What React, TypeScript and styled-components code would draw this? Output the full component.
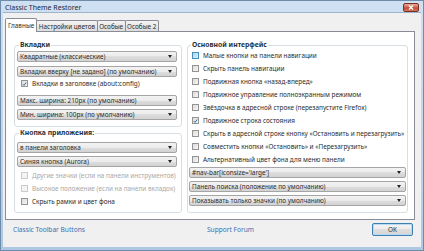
import React from "react";
import styled, { createGlobalStyle, css } from "styled-components";

const GlobalStyle = createGlobalStyle`
  html, body {
    margin: 0;
    padding: 0;
  }
  body {
    width: 424px;
    height: 251px;
    overflow: hidden;
    background: #ffffff;
    font-family: "Noto Sans", "Liberation Sans", sans-serif;
    color: #2b2b2b;
  }
`;

const Window = styled.div`
  width: 424px;
  height: 251px;
  box-sizing: border-box;
  display: flex;
  flex-direction: column;
  border: 1px solid #6f8cab;
  padding: 0 2px 3px 2px;
  background: linear-gradient(#cfe0f2, #bfd4ea 60%, #aec8e3);
`;

const TitleBar = styled.div`
  height: 11px;
  display: flex;
  align-items: center;
  padding-left: 2px;
`;

const Title = styled.span`
  font-size: 7px;
  line-height: 11px;
  color: #1b2838;
  margin-top: 1px;
`;

const CloseButton = styled.div`
  margin-left: auto;
  margin-right: 2px;
  align-self: flex-start;
  margin-top: 2px;
  width: 16px;
  height: 9px;
  box-sizing: border-box;
  border: 1px solid #7a3026;
  border-radius: 2px;
  background: linear-gradient(#e8a898, #d06a58 45%, #c04834 55%, #d47a62);
  display: flex;
  align-items: center;
  justify-content: center;
`;

const Client = styled.div`
  flex: 1;
  display: flex;
  flex-direction: column;
  background: #f0f0f0;
  border-top: 1px solid #9eb4cc;
  padding-top: 5px;
`;

const TabStrip = styled.div`
  display: flex;
  align-items: flex-end;
  height: 13px;
  padding-left: 2px;
  position: relative;
  z-index: 1;
`;

const Tab = styled.div<{ $active?: boolean }>`
  box-sizing: border-box;
  font-size: 6.4px;
  padding: 0 1.5px;
  border: 1px solid #898c95;
  border-bottom: none;
  border-radius: 2px 2px 0 0;
  margin-right: -1px;
  display: flex;
  align-items: center;
  white-space: nowrap;
  ${(p) =>
    p.$active
      ? css`
          height: 14px;
          margin-bottom: -1px;
          padding: 0 2px;
          background: #ffffff;
          position: relative;
          z-index: 2;
        `
      : css`
          height: 11px;
          background: linear-gradient(#f5f5f5, #e8e8e8 50%, #dcdcdc);
        `}
`;

const TabPanel = styled.div`
  height: 189px;
  box-sizing: border-box;
  margin: 0 6px 0 2px;
  border: 1px solid #898c95;
  background: #ffffff;
  padding: 9px 6px 7px 8px;
  display: grid;
  grid-template-columns: 168px 221px;
  column-gap: 5px;
`;

const Column = styled.div`
  display: flex;
  flex-direction: column;
  gap: 2px;
`;

const Group = styled.fieldset<{ $grow?: boolean; $pad: string }>`
  margin: 0;
  min-width: 0;
  border: 1px solid #d5dfe5;
  border-radius: 3px;
  padding: ${(p) => p.$pad};
  display: flex;
  flex-direction: column;
  ${(p) => p.$grow && "flex: 1;"}
`;

const Legend = styled.legend`
  font-size: 6.8px;
  font-weight: 700;
  line-height: 8px;
  padding: 0 1px;
  margin-left: 2px;
  color: #26303a;
`;

const Select = styled.div<{ $mt?: number }>`
  height: 11px;
  box-sizing: border-box;
  margin-top: ${(p) => p.$mt ?? 0}px;
  border: 1px solid #a5a5a5;
  border-radius: 2px;
  background: linear-gradient(#f3f3f3, #ebebeb 50%, #dedede 50%, #d2d2d2);
  display: flex;
  align-items: center;
  padding: 0 4px 0 2px;
  font-size: 6.4px;
  white-space: nowrap;
`;

const SelectText = styled.span`
  flex: 1;
  overflow: hidden;
`;

const Arrow = styled.span`
  width: 0;
  height: 0;
  border-left: 2px solid transparent;
  border-right: 2px solid transparent;
  border-top: 3px solid #222222;
`;

const CheckRow = styled.div<{ $mt?: number; $h?: number; $pl: number; $disabled?: boolean }>`
  height: ${(p) => p.$h ?? 13}px;
  margin-top: ${(p) => p.$mt ?? 0}px;
  padding-left: ${(p) => p.$pl}px;
  display: flex;
  align-items: center;
  gap: 4px;
  font-size: 6.4px;
  white-space: nowrap;
  color: ${(p) => (p.$disabled ? "#a8a8a8" : "#2b2b2b")};
`;

type BoxState = "normal" | "checked" | "hover" | "disabled";

const Box = styled.span<{ $state: BoxState }>`
  width: 7px;
  height: 7px;
  box-sizing: border-box;
  flex: none;
  display: flex;
  align-items: center;
  justify-content: center;
  border: 1px solid #949494;
  background: linear-gradient(135deg, #dcdcdc, #f6f6f6);
  ${(p) =>
    p.$state === "hover" &&
    css`
      border-color: #4a8dc0;
      background: linear-gradient(135deg, #a6d8f3, #dcf0fb);
    `}
  ${(p) =>
    p.$state === "disabled" &&
    css`
      border-color: #cccccc;
      background: #f4f4f4;
    `}
`;

const Footer = styled.div`
  flex: 1;
  display: flex;
  align-items: flex-start;
  padding: 3px 8px 0 10px;
`;

const LinkText = styled.span<{ $w?: number }>`
  font-size: 6.6px;
  line-height: 13px;
  color: #3a6fb3;
  ${(p) => p.$w && `width: ${p.$w}px;`}
  flex: none;
`;

const OkButton = styled.div`
  margin-left: auto;
  width: 41px;
  height: 13px;
  box-sizing: border-box;
  border: 1px solid #3c7fb1;
  border-radius: 2px;
  box-shadow: inset 0 0 0 1px #b8dcf2;
  background: linear-gradient(#f4f4f4, #ececec 50%, #dfdfdf 50%, #d4d4d4);
  font-size: 6.4px;
  display: flex;
  align-items: center;
  justify-content: center;
`;

function Dropdown({ label, mt }: { label: string; mt?: number }) {
  return (
    <Select $mt={mt}>
      <SelectText>{label}</SelectText>
      <Arrow />
    </Select>
  );
}

interface CheckProps {
  label: string;
  state?: BoxState;
  mt?: number;
  h?: number;
  pl: number;
}

function Check({ label, state = "normal", mt, h, pl }: CheckProps) {
  return (
    <CheckRow $mt={mt} $h={h} $pl={pl} $disabled={state === "disabled"}>
      <Box $state={state}>
        {state === "checked" && (
          <svg width="6" height="6" viewBox="0 0 6 6">
            <path d="M1 3.2 L2.4 4.7 L5 1.2" fill="none" stroke="#36538f" strokeWidth="1.1" />
          </svg>
        )}
      </Box>
      {label}
    </CheckRow>
  );
}

const rightChecks: { label: string; state?: BoxState }[] = [
  { label: "Малые кнопки на панели навигации", state: "hover" },
  { label: "Скрыть панель навигации" },
  { label: "Подвижная кнопка «назад-вперед»" },
  { label: "Подвижное управление полноэкранным режимом" },
  { label: "Звёздочка в адресной строке (перезапустите Firefox)" },
  { label: "Подвижное строка состояния", state: "checked" },
  { label: "Скрыть в адресной строке кнопку «Остановить и перезагрузить»" },
  { label: "Совместить кнопки «Остановить» и «Перезагрузить»" },
  { label: "Альтернативный цвет фона для меню панели" },
];

export default function App() {
  return (
    <>
      <GlobalStyle />
      <Window>
        <TitleBar>
          <Title>Classic Theme Restorer</Title>
          <CloseButton>
            <svg width="6" height="5" viewBox="0 0 6 5">
              <path d="M1 0.5 L5 4.5 M5 0.5 L1 4.5" stroke="#ffffff" strokeWidth="1.2" />
            </svg>
          </CloseButton>
        </TitleBar>
        <Client>
          <TabStrip>
            <Tab $active>Главные</Tab>
            <Tab>Настройки цветов</Tab>
            <Tab>Особые</Tab>
            <Tab>Особые 2</Tab>
          </TabStrip>
          <TabPanel>
            <Column>
              <Group $pad="0 4px 6px 2px">
                <Legend>Вкладки</Legend>
                <Dropdown mt={2} label="Квадратные (классические)" />
                <Dropdown mt={4} label="Вкладки вверху [не задано] (по умолчанию)" />
                <Check pl={4} mt={1} h={11} state="checked" label="Вкладки в заголовке (about:config)" />
                <Dropdown mt={6} label="Макс. ширина: 210px (по умолчанию)" />
                <Dropdown mt={3} label="Мин. ширина: 100px (по умолчанию)" />
              </Group>
              <Group $grow $pad="0 4px 2px 2px">
                <Legend>Кнопка приложения:</Legend>
                <Dropdown mt={5} label="в панели заголовка" />
                <Dropdown mt={3} label="Синяя кнопка (Aurora)" />
                <Check pl={4} mt={2} state="disabled" label="Другие значки (если на панели инструментов)" />
                <Check pl={4} state="disabled" label="Высокое положение (если на панели вкладок)" />
                <Check pl={4} label="Скрыть рамки и цвет фона" />
              </Group>
            </Column>
            <Column>
              <Group $grow $pad="0 1px 6px 1px">
                <Legend>Основной интерфейс</Legend>
                {rightChecks.map((c) => (
                  <Check key={c.label} pl={3} state={c.state} label={c.label} />
                ))}
                <Dropdown mt={1} label="#nav-bar[iconsize='large']" />
                <Dropdown mt={3} label="Панель поиска (положение по умолчанию)" />
                <Dropdown mt={3} label="Показывать только значки (по умолчанию)" />
              </Group>
            </Column>
          </TabPanel>
          <Footer>
            <LinkText $w={194}>Classic Toolbar Buttons</LinkText>
            <LinkText>Support Forum</LinkText>
            <OkButton>OK</OkButton>
          </Footer>
        </Client>
      </Window>
    </>
  );
}
